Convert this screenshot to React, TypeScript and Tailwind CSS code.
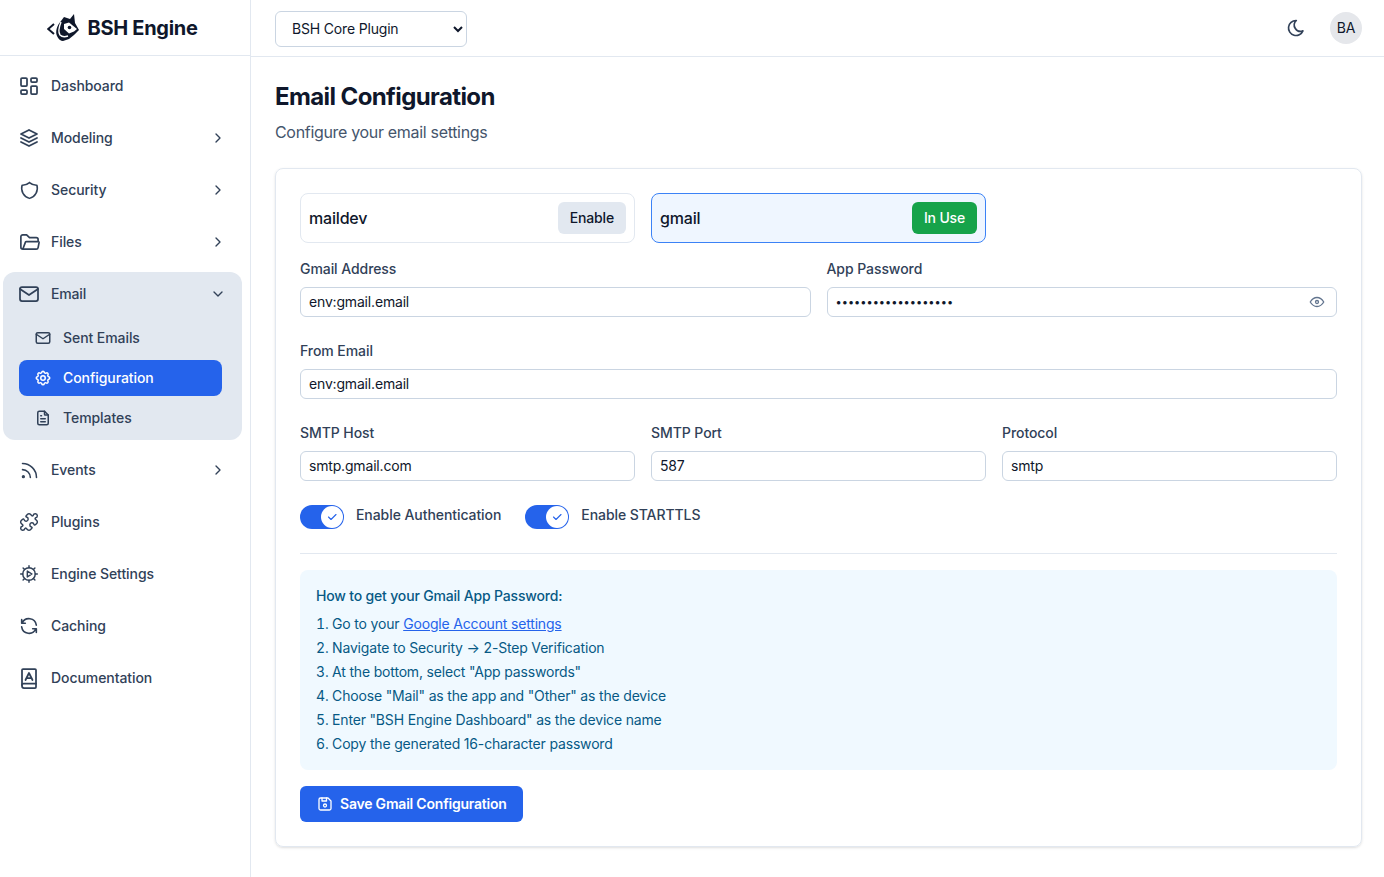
import React from "react";
import {
  TbLayoutDashboard,
  TbStack2,
  TbShield,
  TbFolderOpen,
  TbMail,
  TbSettings,
  TbFileText,
  TbRss,
  TbRefresh,
  TbChevronRight,
  TbChevronDown,
  TbMoon,
  TbEye,
  TbDeviceFloppy,
  TbCheck,
} from "react-icons/tb";
import { Puzzle } from "lucide-react";

type IconType = React.ComponentType<{ size?: number; className?: string; strokeWidth?: number }>;

const Logo = () => (
  <svg width="32" height="27" viewBox="0 0 32 27" className="shrink-0">
    <path d="M7 10 L1.2 15 L7 20" fill="none" stroke="#0f172a" strokeWidth="2" />
    <path
      d="M14 7 C10 11 8 18 10 22 C11 25 14 27 16 27 L22 25 L27 21 L32 16 L28 9 L27 0 L23 5 L17 3 Z"
      fill="#0f172a"
    />
    <path d="M17 10 L22 8.5 L30 15 L27 17.5 L22 19.5 L17 15 Z" fill="#ffffff" />
    <circle cx="22.5" cy="13.5" r="1.8" fill="#0f172a" />
    <path d="M14 8 C12 13 11 18 13 21 C15 23 18 23 21 22" fill="none" stroke="#ffffff" strokeWidth="1.4" />
  </svg>
);

const BookIcon: IconType = ({ size, className }) => (
  <svg
    width={size}
    height={size}
    viewBox="0 0 24 24"
    fill="none"
    stroke="currentColor"
    strokeWidth="1.75"
    strokeLinecap="round"
    strokeLinejoin="round"
    className={className}
  >
    <path d="M5 19V4a1 1 0 0 1 1-1h12a1 1 0 0 1 1 1v17a1 1 0 0 1-1 1H7a2 2 0 0 1-2-2Z" />
    <path d="M5 19a1.5 1.5 0 0 1 1.5-1.5H19" />
    <path d="M8.5 14l3.5-7 3.5 7" />
    <path d="M10 12h4" />
  </svg>
);

// gear with teeth and a play triangle in the middle
const EngineIcon: IconType = ({ size, className }) => (
  <svg
    width={size}
    height={size}
    viewBox="0 0 24 24"
    fill="none"
    stroke="currentColor"
    strokeWidth="1.75"
    strokeLinecap="round"
    strokeLinejoin="round"
    className={className}
  >
    <circle cx="12" cy="12" r="7.5" />
    <path d="M12 2v2.5M12 19.5V22M2 12h2.5M19.5 12H22M4.9 4.9l1.8 1.8M17.3 17.3l1.8 1.8M4.9 19.1l1.8-1.8M17.3 6.7l1.8-1.8" />
    <path d="M10 8.5v7l5.5-3.5Z" />
  </svg>
);

const NavItem = ({
  icon: Icon,
  label,
  chevron,
  size = 24,
}: {
  icon: IconType;
  label: string;
  chevron?: boolean;
  size?: number;
}) => (
  <div className="flex h-11 items-center rounded-xl pl-[14px] pr-4 text-sm font-medium tracking-[-0.005em] text-slate-700">
    <span className="mr-[10px] flex w-6 shrink-0 items-center justify-center">
      <Icon size={size} strokeWidth={1.75} className="text-slate-700" />
    </span>
    <span className="flex-1">{label}</span>
    {chevron && <TbChevronRight size={16} className="text-slate-700" />}
  </div>
);

const SubItem = ({ icon: Icon, label, active }: { icon: IconType; label: string; active?: boolean }) => (
  <div
    className={`flex h-9 items-center rounded-lg pl-[15px] text-sm font-medium tracking-[-0.005em] ${
      active ? "bg-[#2563eb] text-white" : "text-slate-700"
    }`}
  >
    <Icon size={18} strokeWidth={2} className="mr-[11px] shrink-0" />
    <span>{label}</span>
  </div>
);

const Field = ({ label, value }: { label: string; value: string }) => (
  <div>
    <label className="mb-2 block text-sm font-medium tracking-[-0.005em] text-slate-700">{label}</label>
    <input
      readOnly
      value={value}
      className="block h-[30px] w-full rounded-md border border-slate-300 bg-white px-2 pb-px text-sm text-slate-900 outline-none"
    />
  </div>
);

const Toggle = ({ label }: { label: string }) => (
  <div className="flex items-center gap-3">
    <div className="flex h-6 w-11 items-center justify-end rounded-full bg-[#2563eb] pr-px">
      <span className="flex h-[22px] w-[22px] items-center justify-center rounded-full bg-white text-[#2563eb]">
        <TbCheck size={12} strokeWidth={2.25} />
      </span>
    </div>
    <span className="pb-1 text-sm font-medium tracking-[-0.005em] text-slate-700">{label}</span>
  </div>
);

const steps = [
  "Navigate to Security → 2-Step Verification",
  'At the bottom, select "App passwords"',
  'Choose "Mail" as the app and "Other" as the device',
  'Enter "BSH Engine Dashboard" as the device name',
  "Copy the generated 16-character password",
];

export default function App() {
  return (
    <div className="flex min-h-[877px] bg-white font-['Inter',sans-serif] tracking-[-0.011em]">
      {/* Sidebar */}
      <aside className="w-[251px] shrink-0 border-r border-slate-200">
        <div className="flex h-[56px] items-center justify-center gap-2 border-b border-slate-200 pr-[5px]">
          <Logo />
          <span className="text-xl font-bold tracking-[-0.015em] text-slate-900">BSH Engine</span>
        </div>
        <nav className="flex flex-col gap-2 pl-[3px] pr-2 pt-2">
          <NavItem icon={TbLayoutDashboard} label="Dashboard" />
          <NavItem icon={TbStack2} label="Modeling" chevron />
          <NavItem icon={TbShield} label="Security" chevron size={21} />
          <NavItem icon={TbFolderOpen} label="Files" chevron size={23} />
          <div className="rounded-xl bg-slate-200 pb-1">
            <div className="flex h-11 items-center pl-[14px] pr-4 text-sm font-medium text-slate-700">
              <TbMail size={24} strokeWidth={1.75} className="mr-[10px] shrink-0" />
              <span className="flex-1">Email</span>
              <TbChevronDown size={16} />
            </div>
            <div className="ml-4 mr-5 mt-1 flex flex-col gap-1">
              <SubItem icon={TbMail} label="Sent Emails" />
              <SubItem icon={TbSettings} label="Configuration" active />
              <SubItem icon={TbFileText} label="Templates" />
            </div>
          </div>
          <NavItem icon={TbRss} label="Events" chevron size={21} />
          <NavItem icon={Puzzle} label="Plugins" size={20} />
          <NavItem icon={EngineIcon} label="Engine Settings" size={20} />
          <NavItem icon={TbRefresh} label="Caching" size={22} />
          <NavItem icon={BookIcon} label="Documentation" />
        </nav>
      </aside>

      {/* Main */}
      <div className="min-w-0 flex-1">
        <header className="flex h-[57px] items-center justify-between border-b border-slate-200 pl-6 pr-[22px]">
          <select className="mt-px h-9 w-[192px] rounded-md border border-slate-300 bg-white pl-3 pr-1 text-sm text-slate-900">
            <option>BSH Core Plugin</option>
          </select>
          <div className="flex items-center gap-6">
            <TbMoon size={20} className="text-slate-700" />
            <div className="flex h-8 w-8 items-center justify-center rounded-full bg-gray-200 text-sm text-slate-900">
              BA
            </div>
          </div>
        </header>

        <main className="pb-6 pl-6 pr-[22px] pt-6">
          <h1 className="text-2xl font-bold tracking-tight text-slate-900">Email Configuration</h1>
          <p className="mb-6 mt-[7px] text-base tracking-[-0.02em] text-slate-600">Configure your email settings</p>

          <div className="rounded-lg border border-slate-200 p-6 shadow-sm">
            <div className="grid grid-cols-3 gap-4">
              <div className="flex h-[50px] items-center justify-between rounded-lg border border-slate-200 pl-2 pr-2">
                <span className="text-base font-medium text-slate-900">maildev</span>
                <button className="h-8 rounded-md bg-slate-200 px-3 text-sm font-medium text-slate-900">
                  Enable
                </button>
              </div>
              <div className="flex h-[50px] items-center justify-between rounded-lg border border-[#3b82f6] bg-[#eff6ff] pl-2 pr-2">
                <span className="text-base font-medium text-slate-900">gmail</span>
                <button className="h-8 rounded-md bg-[#16a34a] px-3 text-sm font-medium text-white">
                  In Use
                </button>
              </div>
            </div>

            <div className="mt-4 grid grid-cols-2 gap-4">
              <Field label="Gmail Address" value="env:gmail.email" />
              <div>
                <label className="mb-2 block text-sm font-medium tracking-[-0.005em] text-slate-700">App Password</label>
                <div className="relative">
                  <input
                    readOnly
                    type="password"
                    value="env:gmail.password1"
                    className="block h-[30px] w-full rounded-md border border-slate-300 bg-white px-2 pb-px text-[11px] tracking-normal text-slate-900 outline-none"
                  />
                  <TbEye size={18} strokeWidth={1.75} className="absolute right-[11px] top-[6px] text-slate-500" />
                </div>
              </div>
            </div>

            <div className="mt-6">
              <Field label="From Email" value="env:gmail.email" />
            </div>

            <div className="mt-6 grid grid-cols-3 gap-4">
              <Field label="SMTP Host" value="smtp.gmail.com" />
              <Field label="SMTP Port" value="587" />
              <Field label="Protocol" value="smtp" />
            </div>

            <div className="mt-6 flex items-center gap-6">
              <Toggle label="Enable Authentication" />
              <Toggle label="Enable STARTTLS" />
            </div>

            <div className="mt-6 border-t border-slate-200" />

            <div className="mt-4 rounded-lg bg-[#f0f9ff] pb-[14px] pl-4 pr-4 pt-4 text-sm text-[#075985]">
              <p className="font-medium">How to get your Gmail App Password:</p>
              <ol className="mt-[6px] list-inside list-decimal leading-6">
                <li>
                  Go to your{" "}
                  <a href="#" className="text-[#2563eb] underline">
                    Google Account settings
                  </a>
                </li>
                {steps.map((step) => (
                  <li key={step}>{step}</li>
                ))}
              </ol>
            </div>

            <button className="mt-4 flex h-9 items-center gap-1.5 rounded-md bg-[#2563eb] px-4 text-sm font-semibold tracking-[-0.015em] text-white">
              <TbDeviceFloppy size={18} strokeWidth={1.75} />
              Save Gmail Configuration
            </button>
          </div>
        </main>
      </div>
    </div>
  );
}
